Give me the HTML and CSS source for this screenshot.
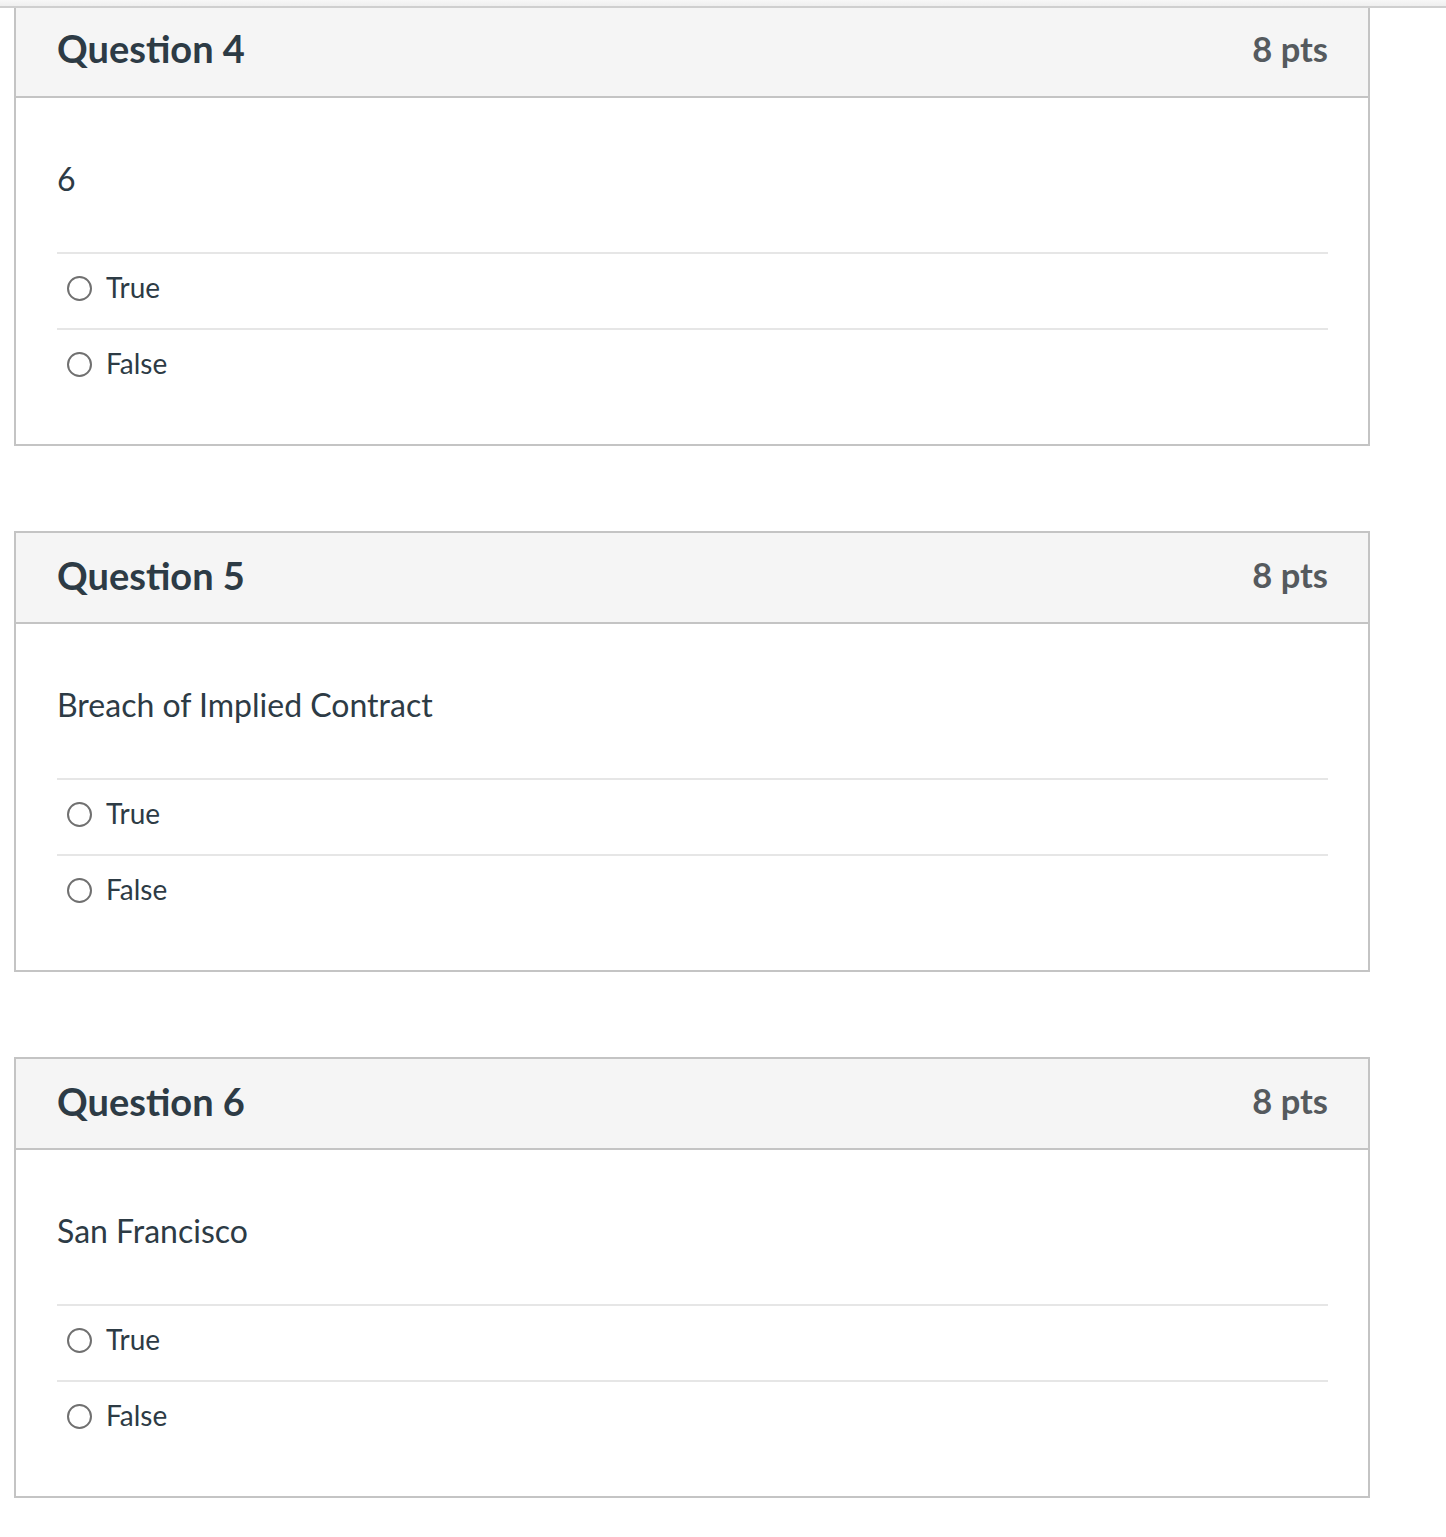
FILE: index.html
```html
<!DOCTYPE html>
<html lang="en">
<head>
<meta charset="utf-8">
<title>Quiz</title>
<link rel="stylesheet" href="styles.css">
</head>
<body>
<div class="topbar"></div>
<div class="quiz">
  <section class="question first">
    <header class="q-header">
      <h2 class="q-title">Question 4</h2>
      <span class="q-pts">8 pts</span>
    </header>
    <div class="q-body">
      <p class="q-text">6</p>
      <div class="answers">
        <label class="answer"><span class="radio"></span><span class="a-text">True</span></label>
        <label class="answer"><span class="radio"></span><span class="a-text">False</span></label>
      </div>
    </div>
  </section>
  <section class="question">
    <header class="q-header">
      <h2 class="q-title">Question 5</h2>
      <span class="q-pts">8 pts</span>
    </header>
    <div class="q-body">
      <p class="q-text">Breach of Implied Contract</p>
      <div class="answers">
        <label class="answer"><span class="radio"></span><span class="a-text">True</span></label>
        <label class="answer"><span class="radio"></span><span class="a-text">False</span></label>
      </div>
    </div>
  </section>
  <section class="question">
    <header class="q-header">
      <h2 class="q-title">Question 6</h2>
      <span class="q-pts">8 pts</span>
    </header>
    <div class="q-body">
      <p class="q-text">San Francisco</p>
      <div class="answers">
        <label class="answer"><span class="radio"></span><span class="a-text">True</span></label>
        <label class="answer"><span class="radio"></span><span class="a-text">False</span></label>
      </div>
    </div>
  </section>
</div>
</body>
</html>
```
FILE: styles.css
```css
html, body {
  margin: 0;
  padding: 0;
  background: #ffffff;
  font-family: Lato, "Open Sans", "Liberation Sans", sans-serif;
  color: #2d3b45;
}
.topbar {
  height: 6px;
  background: linear-gradient(#f7f7f7, #efefef);
  border-bottom: 2px solid #cfcfcf;
}
.quiz {
  padding-left: 14px;
  width: 1356px;
}
.question {
  border: 2px solid #c4c4c4;
  margin-top: 85px;
}
.question.first {
  border-top: none;
  margin-top: 0;
}
.q-header {
  height: 91px;
  box-sizing: border-box;
  background: #f5f5f5;
  border-bottom: 2px solid #c4c4c4;
  display: flex;
  align-items: center;
  justify-content: space-between;
  padding: 0 40px 6px 41px;
}
.question.first .q-header {
  height: 90px;
  padding-bottom: 8px;
}
.q-title {
  margin: 0;
  font-size: 38px;
  font-weight: 700;
  color: #2d3b45;
}
.q-pts {
  font-size: 34.5px;
  font-weight: 700;
  color: #555a5e;
}
.q-body {
  padding: 58px 40px 40px 41px;
}
.q-text {
  margin: 0 0 50px;
  font-size: 32px;
  line-height: 46px;
  color: #2d3b45;
}
.answers {
  display: flex;
  flex-direction: column;
}
.answer {
  display: flex;
  align-items: center;
  height: 76px;
  box-sizing: border-box;
  border-top: 2px solid #e6e6e6;
  padding-left: 10px;
  padding-bottom: 8px;
}
.radio {
  width: 21px;
  height: 21px;
  border: 2px solid #707070;
  border-radius: 50%;
  margin-right: 14px;
  margin-top: 2px;
  flex: none;
  background: #fff;
}
.a-text {
  font-size: 28px;
  color: #2d3b45;
}
```
